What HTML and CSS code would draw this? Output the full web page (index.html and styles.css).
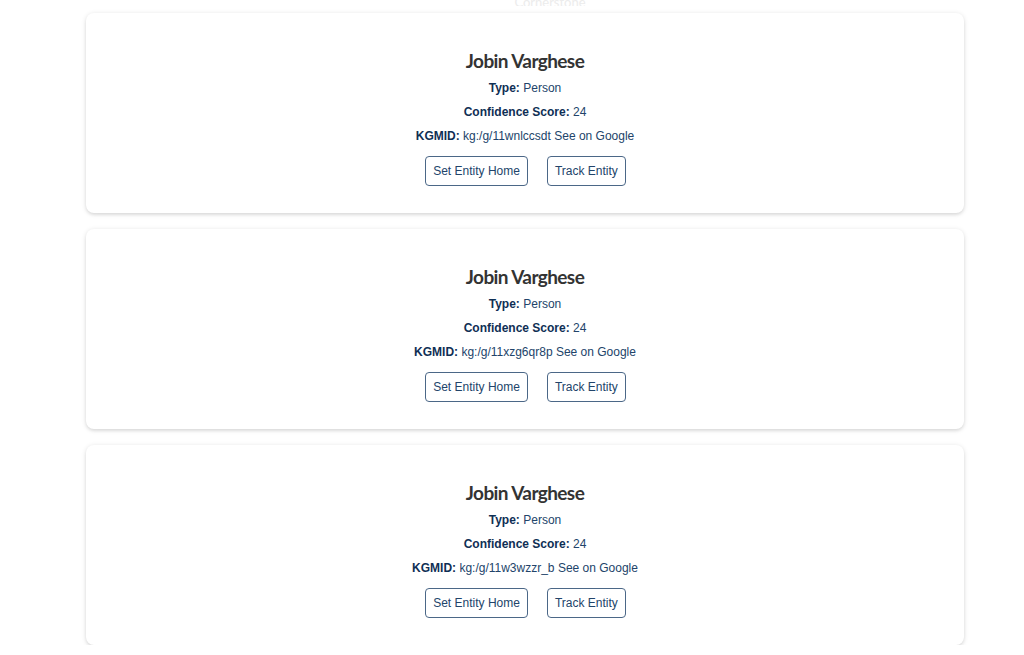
FILE: index.html
```html
<!DOCTYPE html>
<html>
<head>
<meta charset="utf-8">
<link rel="stylesheet" href="styles.css">
</head>
<body>
<div class="brand">Cornerstone</div>
<main class="list">
  <section class="card">
    <h2 class="name">Jobin Varghese</h2>
    <p class="row"><b>Type:</b> Person</p>
    <p class="row"><b>Confidence Score:</b> 24</p>
    <p class="row"><b>KGMID:</b> kg:/g/11wnlccsdt <a class="link">See on Google</a></p>
    <div class="actions">
      <button class="btn">Set Entity Home</button>
      <button class="btn">Track Entity</button>
    </div>
  </section>
  <section class="card">
    <h2 class="name">Jobin Varghese</h2>
    <p class="row"><b>Type:</b> Person</p>
    <p class="row"><b>Confidence Score:</b> 24</p>
    <p class="row"><b>KGMID:</b> kg:/g/11xzg6qr8p <a class="link">See on Google</a></p>
    <div class="actions">
      <button class="btn">Set Entity Home</button>
      <button class="btn">Track Entity</button>
    </div>
  </section>
  <section class="card">
    <h2 class="name">Jobin Varghese</h2>
    <p class="row"><b>Type:</b> Person</p>
    <p class="row"><b>Confidence Score:</b> 24</p>
    <p class="row"><b>KGMID:</b> kg:/g/11w3wzzr_b <a class="link">See on Google</a></p>
    <div class="actions">
      <button class="btn">Set Entity Home</button>
      <button class="btn">Track Entity</button>
    </div>
  </section>
</main>
</body>
</html>
```
FILE: styles.css
```css
html, body {
  margin: 0;
  padding: 0;
  background: #ffffff;
}
body {
  font-family: "Liberation Sans", Arial, sans-serif;
  overflow: hidden;
}
.brand {
  height: 12px;
  margin-top: -6px;
  text-align: center;
  font-family: Lato, sans-serif;
  font-size: 13px;
  line-height: 16px;
  color: #ececec;
  padding-left: 76px;
  overflow: hidden;
}
.list {
  display: flex;
  flex-direction: column;
  gap: 16px;
  width: 878px;
  margin: 7px 0 0 86px;
}
.card {
  background: #fff;
  border-radius: 8px;
  box-shadow: 0 1px 5px rgba(0, 0, 0, 0.13), 0 2px 3px rgba(0, 0, 0, 0.06);
  padding: 36px 20px 28px;
  text-align: center;
  height: 200px;
  box-sizing: border-box;
}
.name {
  margin: 0 0 3px;
  font-family: Lato, sans-serif;
  font-weight: 700;
  font-size: 19px;
  line-height: 24px;
  color: #333333;
  letter-spacing: -0.6px;
}
.row {
  margin: 0;
  font-size: 12px;
  line-height: 24px;
  color: #22446a;
}
.row b {
  color: #0f2f55;
}
.link {
  color: #22446a;
}
.actions {
  display: flex;
  justify-content: center;
  gap: 19px;
  margin-top: 8px;
  padding-left: 1px;
}
.btn {
  font-family: "Liberation Sans", Arial, sans-serif;
  font-size: 12px;
  color: #22446a;
  background: #fff;
  border: 1px solid #4b6787;
  border-radius: 4px;
  height: 30px;
  padding: 0 7px;
  line-height: 28px;
}
```
